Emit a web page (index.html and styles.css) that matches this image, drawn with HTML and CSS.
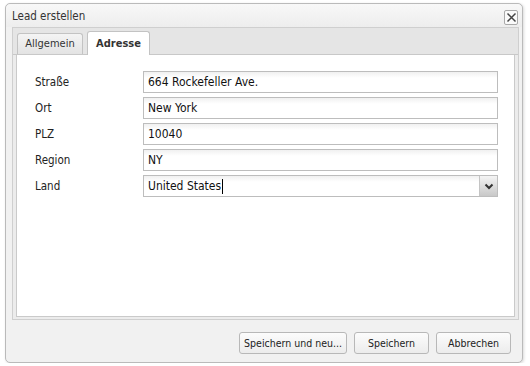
FILE: index.html
```html
<!DOCTYPE html>
<html>
<head>
<meta charset="utf-8">
<link rel="stylesheet" href="styles.css">
</head>
<body>
<div class="window">
  <div class="titlebar">
    <span class="title">Lead erstellen</span>
    <span class="close"><svg width="11" height="11" viewBox="0 0 11 11"><path d="M1.5 1.5 L9.5 9.5 M9.5 1.5 L1.5 9.5" stroke="#444" stroke-width="1.5" fill="none"/></svg></span>
  </div>
  <div class="frame">
    <div class="tabstrip">
      <div class="tab">Allgemein</div>
      <div class="tab active">Adresse</div>
    </div>
    <div class="tabbody">
      <div class="row"><label>Straße</label><div class="field">664 Rockefeller Ave.</div></div>
      <div class="row"><label>Ort</label><div class="field">New York</div></div>
      <div class="row"><label>PLZ</label><div class="field">10040</div></div>
      <div class="row"><label>Region</label><div class="field">NY</div></div>
      <div class="row"><label>Land</label><div class="field combo"><span class="val">United States<span class="caret"></span></span><span class="trigger"><svg width="10" height="7" viewBox="0 0 10 7"><path d="M1.5 1.5 L5 5 L8.5 1.5" stroke="#333" stroke-width="2" fill="none"/></svg></span></div></div>
    </div>
  </div>
  <div class="footer">
    <button class="btn">Speichern und neu...</button>
    <button class="btn">Speichern</button>
    <button class="btn">Abbrechen</button>
  </div>
</div>
</body>
</html>
```
FILE: styles.css
```css
html, body {
  margin: 0;
  padding: 0;
  background: #ffffff;
  font-family: "DejaVu Sans Condensed", "Liberation Sans", Arial, sans-serif;
  font-size: 11.5px;
  color: #000;
}
.window {
  margin: 3px 0 0 5px;
  width: 516px;
  height: 358px;
  border: 1px solid #bababa;
  border-radius: 5px;
  background: #f1f1f1;
  box-shadow: 1px 1px 3px rgba(0,0,0,0.15);
  display: flex;
  flex-direction: column;
}
.titlebar {
  height: 23px;
  flex: none;
  display: flex;
  align-items: center;
  justify-content: space-between;
  padding: 0 4px 0 6px;
  background: linear-gradient(#f8f8f8, #ededed);
  border-radius: 5px 5px 0 0;
}
.title {
  font-size: 11.5px;
  color: #333;
  padding-top: 0;
}
.close {
  width: 12px;
  height: 13px;
  border: 1px solid #a9a9a9;
  border-radius: 2px;
  background: #fafafa;
  display: flex;
  align-items: center;
  justify-content: center;
  margin-top: 3px;
}
.frame {
  flex: none;
  margin: 0 3px 0 6px;
  border: 1px solid #cfcfcf;
  background: #ececec;
  height: 291px;
  display: flex;
  flex-direction: column;
}
.tabstrip {
  height: 26px;
  flex: none;
  background: #e5e5e5;
  border-bottom: 1px solid #c8c8c8;
  display: flex;
  align-items: flex-end;
  gap: 4px;
  padding-left: 4px;
}
.tab {
  height: 20px;
  line-height: 20px;
  width: 64px;
  text-align: center;
  border: 1px solid #c3c3c3;
  border-bottom: none;
  border-radius: 3px 3px 0 0;
  background: linear-gradient(#f4f4f4, #e3e3e3);
  color: #333;
  font-size: 11px;
}
.tab.active {
  width: 61px;
  height: 23px;
  line-height: 23px;
  background: #fff;
  font-weight: bold;
  margin-bottom: -1px;
  position: relative;
}
.tabbody {
  flex: 1;
  margin: 0 3px 2px 3px;
  background: #fff;
  border: 1px solid #cacaca;
  border-top: none;
  padding: 16px 16px 0 18px;
  display: flex;
  flex-direction: column;
  gap: 4px;
}
.row {
  display: flex;
  align-items: center;
  height: 22px;
}
.row label {
  width: 108px;
  color: #222;
  font-size: 11.5px;
}
.field {
  flex: 1;
  height: 20px;
  border: 1px solid #bdbdbd;
  background: linear-gradient(#f0f0f0, #fff 6px);
  padding-left: 4px;
  line-height: 20px;
  font-size: 12px;
  color: #111;
  display: flex;
  align-items: center;
}
.combo {
  justify-content: space-between;
}
.val {
  display: flex;
  align-items: center;
}
.caret {
  display: inline-block;
  width: 1px;
  height: 15px;
  background: #000;
  margin-left: 1px;
}
.trigger {
  width: 17px;
  height: 20px;
  background: linear-gradient(#f4f4f4, #c8c8c8);
  border-left: 1px solid #c4c4c4;
  display: flex;
  align-items: center;
  justify-content: center;
}
.footer {
  flex: 1;
  display: flex;
  justify-content: flex-end;
  align-items: flex-start;
  gap: 7px;
  padding-top: 12px;
  padding-right: 11px;
}
.btn {
  height: 22px;
  padding: 0 4px;
  border: 1px solid #b8b8b8;
  border-radius: 3px;
  background: linear-gradient(#fcfcfc, #ececec);
  font-family: "DejaVu Sans Condensed", "Liberation Sans", Arial, sans-serif;
  font-size: 10.5px;
  color: #222;
  min-width: 75px;
}
```
